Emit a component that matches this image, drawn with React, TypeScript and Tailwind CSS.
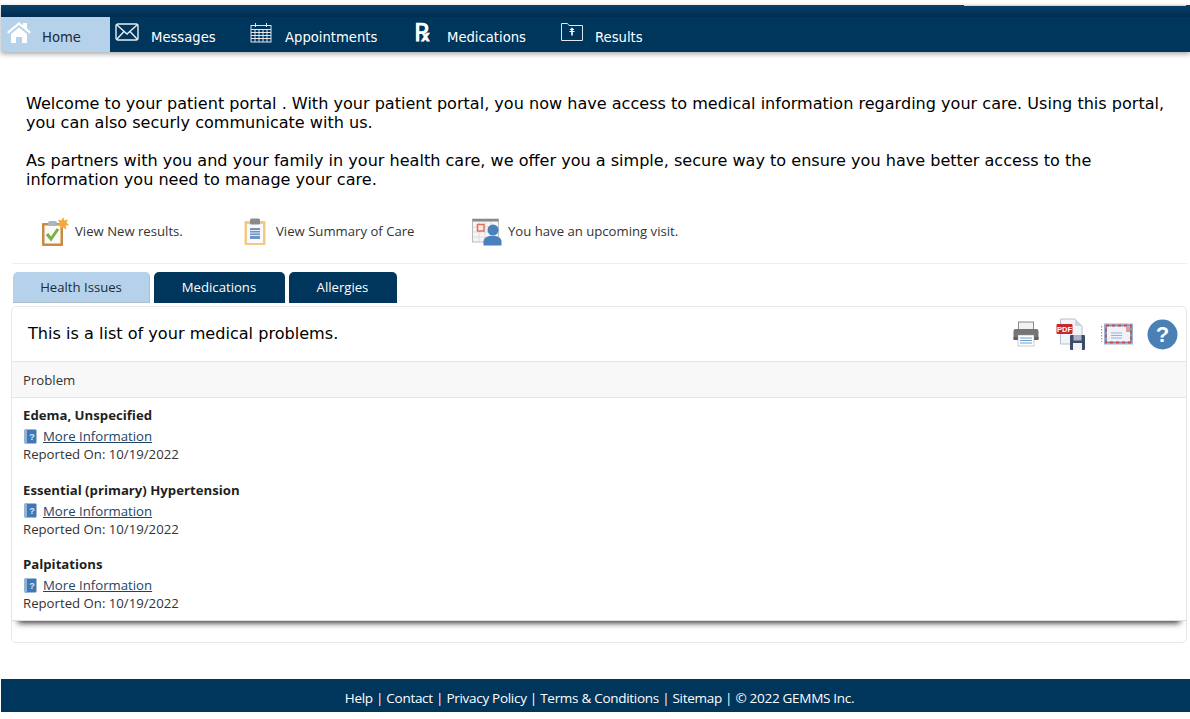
import type { ReactNode } from "react";

const segoe = "font-['Open_Sans',sans-serif]";

function HomeIcon() {
  return (
    <svg width="26" height="24" viewBox="0 0 26 24">
      <path d="M1 12 13 2l4 3.300V3h4v5.600L25 12l-1.500 1.500L13 5 2.500 13.500z" fill="#fff" />
      <path d="M5 14 13 7.500 21 14v9h-5v-6h-6v6H5z" fill="#fff" />
    </svg>
  );
}

function MailIcon() {
  return (
    <svg width="24" height="19" viewBox="0 0 24 19" fill="none" stroke="#e8eef3" strokeWidth="1.400">
      <rect x="1" y="1" width="22" height="16" rx="2" />
      <path d="M2 2l10 9 10-9M2 16l7-7.500M22 16l-7-7.500" />
    </svg>
  );
}

function CalendarIcon() {
  return (
    <svg width="22" height="21" viewBox="0 0 22 21" fill="none" stroke="#dfe6ec" strokeWidth="1">
      <rect x="1" y="3.500" width="20" height="16.500" />
      <path d="M1 7.500h20M1 10.500h20M1 13.500h20M1 16.500h20M5 7.500V20M9 7.500V20M13 7.500V20M17 7.500V20M5.500 1v4M16.500 1v4" />
    </svg>
  );
}

function ResultsIcon() {
  return (
    <svg width="24" height="20" viewBox="0 0 24 20" fill="none" stroke="#dfe6ec" strokeWidth="1">
      <path d="M1.500 18.500V1.500h6l1.500 2h13.500v15z" />
      <path d="M9.500 8h5l-2.500-2.500zM11.200 8h1.600v5.500h-1.600z" fill="#fff" stroke="none" />
      <path d="M9.500 9.500h5" stroke="#fff" />
    </svg>
  );
}

function ResultsNewIcon() {
  return (
    <svg width="28" height="30" viewBox="0 0 28 30">
      <rect x="1" y="6" width="21" height="23" rx="1" fill="#c98a45" />
      <rect x="3.500" y="8.500" width="16" height="18" fill="#fbfaf5" />
      <rect x="7" y="4" width="9" height="5" rx="2" fill="#a9b6c2" />
      <path d="M6 17l4 5 7-10" fill="none" stroke="#79b04a" strokeWidth="3" />
      <path d="M22 0l1.400 3.500L27 2.500l-1.500 3.300L28 8l-3.300.8.500 3.600-3-2-3 2 .5-3.600L16 8l2.500-2.200L17 2.500l3.600 1z" fill="#f0a93c" />
    </svg>
  );
}

function ClipboardIcon() {
  return (
    <svg width="22" height="27" viewBox="0 0 22 27">
      <rect x="0.500" y="3" width="21" height="24" rx="1" fill="#f3c983" />
      <rect x="3" y="6" width="16" height="19" fill="#fafafa" />
      <rect x="6" y="0.500" width="10" height="6" rx="1.500" fill="#8b8b8b" />
      <rect x="6" y="10" width="10" height="11" fill="#6f95c4" />
      <path d="M6 12.500h10M6 15h10M6 17.500h10" stroke="#fff" strokeWidth="0.800" />
    </svg>
  );
}

function VisitIcon() {
  return (
    <svg width="31" height="28" viewBox="0 0 31 28">
      <rect x="0.500" y="1" width="26" height="23" fill="#f5f5f5" stroke="#bbb" />
      <rect x="0.500" y="1" width="26" height="2.500" fill="#8a8a8a" />
      <path d="M7 4v20M13 4v20M19 4v20M1 9h25M1 14h25M1 19h25" stroke="#d5d5d5" strokeWidth="0.700" />
      <rect x="5.500" y="6.500" width="6.500" height="6.500" fill="#fbe9e3" stroke="#e0705a" strokeWidth="1.500" />
      <circle cx="21" cy="12" r="5.500" fill="#4a80bc" />
      <path d="M11.500 27.500v-4c0-3 3-5 6-5.500h6c3 .5 6 2.500 6 5.500v4z" fill="#4a80bc" />
    </svg>
  );
}

function PrinterIcon() {
  return (
    <svg width="26" height="26" viewBox="0 0 26 26">
      <rect x="5.500" y="1" width="15" height="9" fill="#f2f2f2" stroke="#8a8a8a" />
      <rect x="0.500" y="8" width="25" height="11" rx="2" fill="#757575" />
      <rect x="0.500" y="16" width="25" height="3" fill="#5f5f5f" />
      <rect x="5" y="14" width="16" height="11" fill="#fff" stroke="#999" strokeWidth="0.500" />
      <path d="M7 17h12M7 19.500h12M7 22h12" stroke="#6f9fcb" strokeWidth="1.200" />
    </svg>
  );
}

function PdfIcon() {
  return (
    <svg width="30" height="32" viewBox="0 0 30 32">
      <path d="M4.500 1H19l7 7v18H4.500z" fill="#f1f4f9" stroke="#b5bfd0" />
      <path d="M19 1v7h7z" fill="#cdd6e3" />
      <rect x="0.500" y="6" width="16" height="10" rx="1" fill="#c5282d" />
      <text x="8.500" y="14" textAnchor="middle" fontSize="7.500" fontWeight="700" fill="#fff" fontFamily="Liberation Sans, sans-serif">
        PDF
      </text>
      <rect x="14" y="17" width="15" height="15" rx="1" fill="#3e4c66" />
      <rect x="17.500" y="17" width="8" height="5.500" fill="#aab6c8" />
      <rect x="17" y="25" width="9" height="7" fill="#eef2f7" />
    </svg>
  );
}

function EnvelopeIcon() {
  return (
    <svg width="32" height="22" viewBox="0 0 32 22">
      <rect x="3.500" y="1" width="28" height="20" fill="#eef3fa" stroke="#9fb2d2" />
      <rect x="5" y="2.500" width="25" height="17" fill="none" stroke="#6f8fc0" strokeWidth="1.800" />
      <rect x="5" y="2.500" width="25" height="17" fill="none" stroke="#cd4f4a" strokeWidth="1.800" strokeDasharray="3 3" />
      <path d="M0.500 3v16" stroke="#8da2c4" strokeWidth="1.500" strokeDasharray="1.500 1.500" />
      <rect x="25" y="4" width="4" height="5" fill="#e39a8e" />
      <path d="M10 10h11M10 12.500h11M10 15h11" stroke="#9db1cf" />
    </svg>
  );
}

function HelpIcon() {
  return (
    <svg width="31" height="31" viewBox="0 0 31 31">
      <circle cx="15.500" cy="15.500" r="15" fill="#4a80b4" />
      <text x="15.500" y="23" textAnchor="middle" fontSize="22" fontWeight="700" fill="#fff" fontFamily="Liberation Sans, sans-serif">
        ?
      </text>
    </svg>
  );
}

function BookIcon() {
  return (
    <svg width="13" height="15" viewBox="0 0 13 15" className="ml-[1px] shrink-0">
      <rect x="0.500" y="0.500" width="12" height="14" rx="1" fill="#3f78b5" />
      <rect x="0.500" y="0.500" width="2.500" height="14" fill="#8fb2d8" />
      <text x="8" y="10.500" textAnchor="middle" fontSize="9" fontWeight="700" fill="#dce8f4" fontFamily="Liberation Sans, sans-serif">
        ?
      </text>
    </svg>
  );
}

function NavItem({ icon, label, width, active }: { icon: ReactNode; label: string; width: string; active?: boolean }) {
  return (
    <div className={`flex h-[35px] items-start ${width} ${active ? "bg-[#b5d2ea] text-[#1c2b36]" : "text-white"}`}>
      {icon}
      <span className="mt-[12px] text-[13.200px] leading-[18px] font-['DejaVu_Sans',sans-serif]">{label}</span>
    </div>
  );
}

function QuickLink({ icon, label, width }: { icon: ReactNode; label: string; width: string }) {
  return (
    <div className={`flex items-center ${width}`}>
      {icon}
      <span className={`text-[13.150px] text-[#333] ${segoe}`}>{label}</span>
    </div>
  );
}

function Problem({ name }: { name: string }) {
  return (
    <div className="mb-[17.500px] h-[57px] leading-[18px]">
      <div className="font-bold text-[#1f1f1f]">{name}</div>
      <div className="mt-[3px] flex items-center">
        <BookIcon />
        <a className="ml-[6px] text-[#1d4566] underline">More Information</a>
      </div>
      <div className="text-[#333]">Reported On: 10/19/2022</div>
    </div>
  );
}

export default function App() {
  return (
    <div className={`h-[719px] w-[1190px] overflow-hidden bg-white ${segoe}`}>
      {/* Top nav */}
      <div className="ml-px mt-[5px] bg-[#00355c] shadow-[0_2px_5px_rgba(0,0,0,0.35)]">
        <div className="flex h-[12px] justify-end bg-gradient-to-b from-[#0c4068] to-[#002d4f]">
          <div className="mr-[4px] h-px w-[222px] bg-[#cfd6dc]" />
        </div>
        <div className="flex">
          <NavItem active width="w-[109px]" label="Home" icon={<div className="ml-[5px] mr-[10px] mt-[3px]"><HomeIcon /></div>} />
          <NavItem width="w-[131px]" label="Messages" icon={<div className="ml-[5px] mr-[12px] mt-[6px]"><MailIcon /></div>} />
          <NavItem width="w-[164px]" label="Appointments" icon={<div className="ml-[9px] mr-[13px] mt-[5px]"><CalendarIcon /></div>} />
          <NavItem width="w-[146px]" label="Medications" icon={<span className="ml-[9px] mr-[10px] mt-[3px] w-[23px] text-[25px] leading-[26px] font-bold text-white font-['DejaVu_Serif',serif]">℞</span>} />
          <NavItem width="w-[110px]" label="Results" icon={<div className="ml-[9px] mr-[11px] mt-[5px]"><ResultsIcon /></div>} />
        </div>
      </div>

      {/* Intro */}
      <div className="ml-[26px] mt-[42px] w-[1150px] text-[16.070px] leading-[19px] text-black font-['DejaVu_Sans',sans-serif]">
        <p>
          Welcome to your patient portal . With your patient portal, you now have access to medical information regarding your care. Using this portal, you can also securly communicate with us.
        </p>
        <p className="mt-[19px]">
          As partners with you and your family in your health care, we offer you a simple, secure way to ensure you have better access to the information you need to manage your care.
        </p>
      </div>

      {/* Quick links */}
      <div className="ml-[12px] mt-[18px] flex h-[57px] w-[1175px] items-center border-b border-[#eee] pb-[7px] pl-[29px]">
        <QuickLink width="w-[203px] gap-[6px]" label="View New results." icon={<ResultsNewIcon />} />
        <QuickLink width="w-[228px] gap-[10px]" label="View Summary of Care" icon={<ClipboardIcon />} />
        <QuickLink width="w-[240px] gap-[5px]" label="You have an upcoming visit." icon={<VisitIcon />} />
      </div>

      {/* Tabs */}
      <div className="ml-[13px] mt-[8px] flex h-[31px] gap-[4px] text-[13.150px]">
        <div className="flex w-[137px] items-center justify-center rounded-t-[5px] border-r border-b border-[#aebfcd] bg-[#b5d2ea] pt-px text-[#1c2b36]">Health Issues</div>
        <div className="flex w-[131px] items-center justify-center rounded-t-[5px] bg-[#00355c] pr-px text-white">Medications</div>
        <div className="flex w-[108px] items-center justify-center rounded-t-[5px] bg-[#00355c] pr-px text-white">Allergies</div>
      </div>

      {/* Panel */}
      <div className="ml-[11px] mt-[3px] h-[337px] w-[1176px] rounded-[5px] border border-[#e8e8e8] bg-white text-[13.200px]">
        <div className="flex h-[55px] items-center justify-between rounded-t-[5px] border-b border-[#e6e6e6] pl-[16px] pr-[8px]">
          <span className="text-[16.100px] text-black font-['DejaVu_Sans',sans-serif]">This is a list of your medical problems.</span>
          <div className="flex items-center">
            <div className="mr-[17px]"><PrinterIcon /></div>
            <div className="mr-[15px]"><PdfIcon /></div>
            <div className="mr-[14px]"><EnvelopeIcon /></div>
            <HelpIcon />
          </div>
        </div>
        <div className="flex h-[36px] items-center border-b border-[#e6e6e6] bg-[#f8f8f8] pl-[11px] pt-[3px] text-[#333]">Problem</div>
        <div className="h-[223px] border-b border-[#ddd] pl-[11px] pt-[8px] shadow-[0_8px_6px_-6px_rgba(0,0,0,0.8)]">
          <Problem name="Edema, Unspecified" />
          <Problem name="Essential (primary) Hypertension" />
          <Problem name="Palpitations" />
        </div>
      </div>

      {/* Footer */}
      <div className="ml-px mt-[36px] flex h-[33px] items-center justify-center bg-[#00355c] pl-[8px] pt-[6px] text-[13.500px] tracking-[-0.29px] text-white">
        Help | Contact | Privacy Policy | Terms &amp; Conditions | Sitemap | © 2022 GEMMS Inc.
      </div>
    </div>
  );
}
